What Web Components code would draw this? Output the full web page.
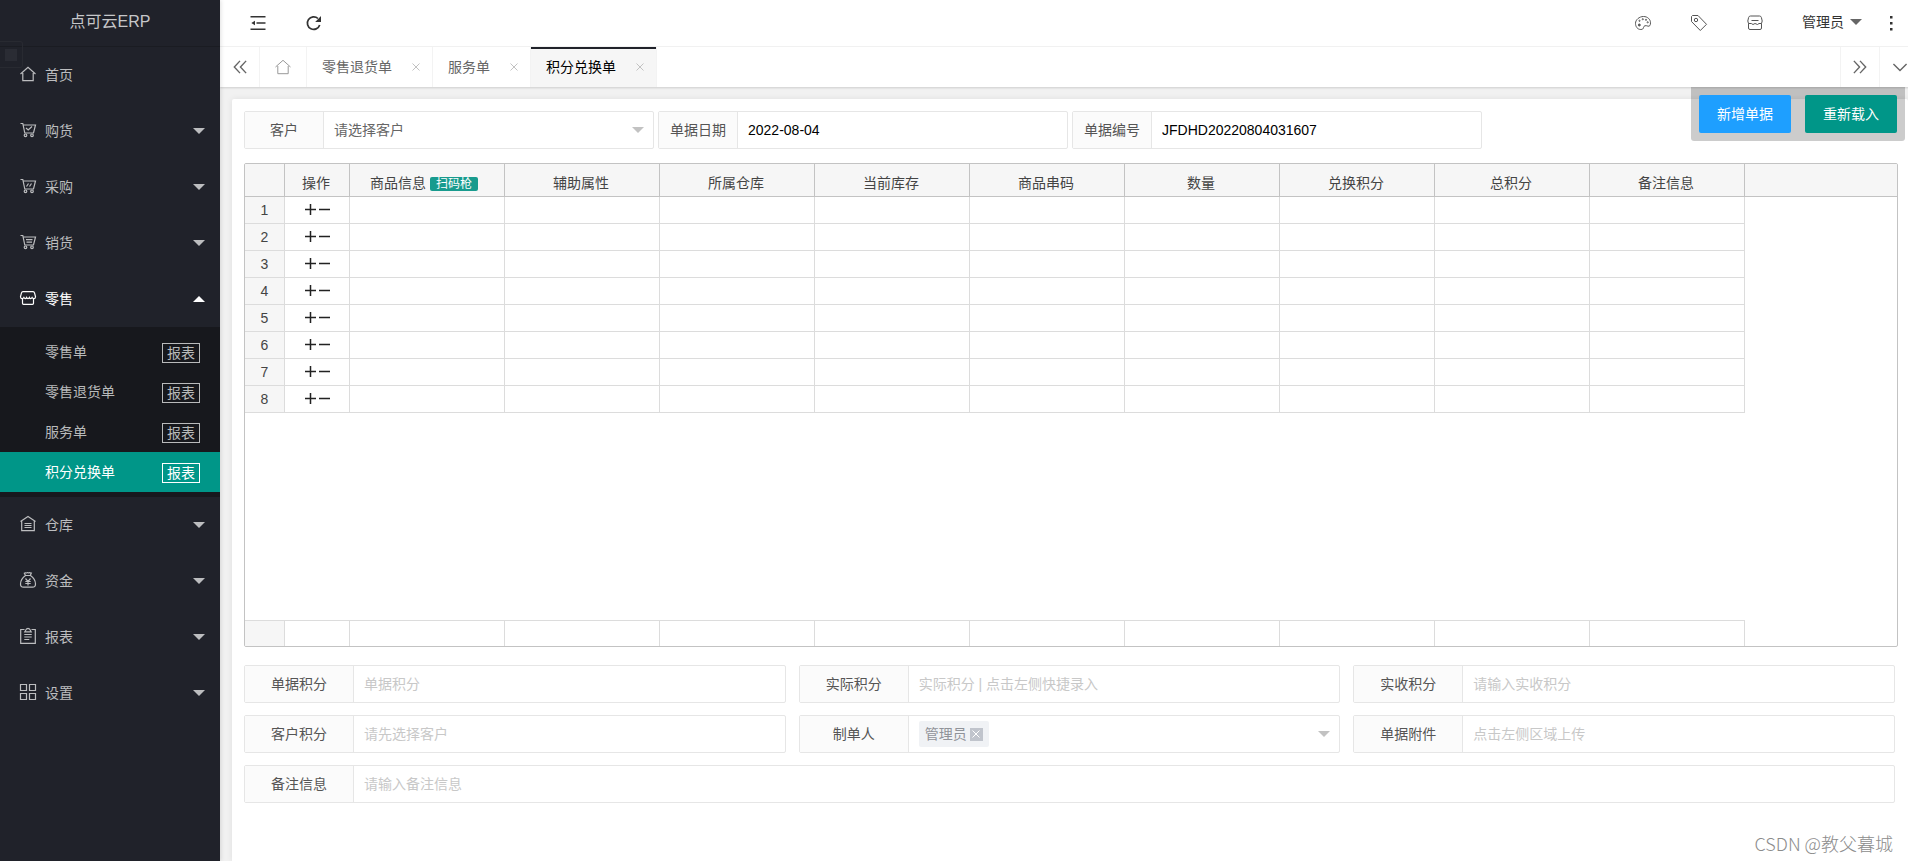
<!DOCTYPE html>
<html lang="zh-CN">
<head>
<meta charset="utf-8">
<title>点可云ERP</title>
<style>
html, body { margin: 0; overflow-x: clip; }
body { font: 14px/20px "Liberation Sans", "Noto Sans CJK SC", sans-serif; color: #333; background: #f1f1f1; }
</style>
</head>
<body>
<erp-app></erp-app>
<script>
class Base extends HTMLElement {
  connectedCallback() {
    if (this.shadowRoot) return;
    const t = document.createElement('template');
    t.innerHTML = `<style>*{box-sizing:border-box}button{font:inherit;border:0;background:none;padding:0;color:inherit;cursor:pointer}a{color:inherit;text-decoration:none}${this.css()}</style>${this.html()}`;
    this.attachShadow({ mode: 'open' }).append(t.content.cloneNode(true));
  }
  attr(n, d = '') { return this.getAttribute(n) ?? d; }
}

const CART = '<path d="M.5 1.500h2.300l2 9.500h8.700l2-8H3.300"/><circle cx="5.500" cy="13.300" r="1.300"/><circle cx="12" cy="13.300" r="1.300"/>';
const ICONS = {
  home: '<path d="M.5 8 8 1.300 15.500 8M2.800 7v7.700h10.400V7"/>',
  cartCheck: CART + '<path d="m6 6 2.200 2L12 4.500"/>',
  cartSlash: CART + '<path d="M6.500 8.500 8.500 5.500M9.500 8.500l2-3"/>',
  cartLines: CART + '<path d="M6 5.700h6.500M6.500 8.200h5.500"/>',
  shop: '<path d="M3 1.700h10q1.200 0 1.500 1.200l1 3.800c0 2.400-2.600 2.400-3.400.8-.8 1.500-2.100 1.500-2.700 0-.7 1.500-2.100 1.500-2.800 0-.6 1.500-1.900 1.500-2.700 0-.8 1.600-3.400 1.600-3.400-.8l1-3.800Q1.800 1.700 3 1.700zM2.500 9v4.300q0 1 1 1h9q1 0 1-1V9"/>',
  store: '<path d="M3.500 1h9q1.500 0 1.900 1.500l.8 3.500-.7 2.500H12l-1.500 1-2.500-1-2 1-1.700-1H1.500L.8 6l.8-3.500Q2 1 3.500 1zM4.500 5.500h7M1.500 8.500v4.500q0 1.500 1.500 1.500h10q1.500 0 1.500-1.500V8.500"/>',
  depot: '<path d="M.5 5.500 8 .5l7.500 5M1.700 5v9.700h12.600V5M4.500 7.500h7M4.500 9.500h7M4.500 11.500h7"/>',
  money: '<path d="M5.500 3.500 4.300 1.200c1-.8 1.800.3 2.700-.5.700-.6 1.400.5 2 .1.800-.4 1.400.4 2.300.4l-1 2.300zM5.500 3.500C2.700 5.500.5 8.600.5 12c0 2.400 1 3.200 3 3.200h9c2 0 3-.800 3-3.200 0-3.400-2.200-6.500-5-8.500M5.500 6.500 8 9.400l2.500-2.900M8 9.400v4M5.300 9.500h5.400M5.300 11.500h5.400"/>',
  report: '<path d="M4.500 1.500H.7v13.800h14.600V1.500h-3.800M4.800 3.800 6.500 1 8 .4 9.500 1l1.700 2.800zM4.300 6.500h7.400M4.300 9h7.400M4.300 11.500h5"/>',
  grid: '<path d="M.5.5h6v6h-6zM9.500.5h6v6h-6zM.5 9.500h6v6h-6zM9.500 9.500h6v6h-6z"/>',
  fold: '<path stroke-width="1.500" d="M.500 1.700h15M6.500 8h9M.500 14.300h15"/><path stroke="none" fill="currentColor" d="M5 5.700v4.600L1.300 8z"/>',
  refresh: '<path stroke-width="1.700" d="M13.700 10A6.300 6.300 0 1 1 12 3.500"/><path stroke="none" fill="currentColor" d="M15 1v6H9.200z"/>',
  palette: '<path d="M8.500 1.500c4 0 7 2.800 7 6.300 0 2.600-1 3.900-2.600 3.300-2.400-.9-4.100-.5-4.400 1.500-.2 1.200-1 1.900-2.700 1.900-3.300 0-5.300-2.800-5.300-6.200S4.200 1.500 8.500 1.500z"/><circle cx="4.500" cy="5.800" r=".6"/><circle cx="7.800" cy="4.200" r=".6"/><circle cx="11" cy="4.800" r=".6"/><circle cx="12.700" cy="7.300" r=".6"/><circle cx="4.300" cy="10" r="1" fill="currentColor"/>',
  tag: '<path d="M.5 1.500v5l8.800 9 6.200-6.200L7 .5H1.500z"/><circle cx="5" cy="5" r="1.700"/>',
  dots: '<path stroke="none" fill="currentColor" d="M7 1h2.500v2.500H7zM7 7h2.500v2.500H7zM7 13h2.500v2.500H7z"/>',
  left: '<path d="M8 1 1.500 8 8 15M15 1 8.500 8l6.500 7"/>',
  right: '<path d="M8 1 14.500 8 8 15M1 1l6.500 7L1 15"/>',
  down: '<path d="M.5 4.500 8 12l7.500-7.500"/>',
  close: '<path d="m1 1 14 14M15 1 1 15"/>',
  plus: '<path d="M0 8h16M8 0v16"/>',
  minus: '<path d="M0 8h16"/>',
  caret: '<path stroke="none" fill="currentColor" d="M0 4h16L8 12z"/>',
  caretUp: '<path stroke="none" fill="currentColor" d="M0 12h16L8 4z"/>'
};
customElements.define('ui-icon', class extends Base {
  css() { return `:host{display:inline-flex;flex:none;width:${this.attr('size', '16')}px;height:${this.attr('size', '16')}px}svg{width:100%;height:100%;overflow:visible}`; }
  html() { return `<svg viewBox="0 0 16 16" fill="none" stroke="currentColor" stroke-width="${this.attr('weight', '1')}" aria-hidden="true">${ICONS[this.attr('name')]}</svg>`; }
});

customElements.define('nav-item', class extends Base {
  css() { return `:host{display:block;color:#bcbdbf}
    a{display:flex;align-items:center;height:56px;padding:0 15px 0 20px;gap:9px}
    .icon{padding-bottom:2px;display:flex}
    .text{flex:1}:host([open]){color:#fff}`; }
  html() {
    const arrow = this.hasAttribute('leaf') ? '' : `<ui-icon name="${this.hasAttribute('open') ? 'caretUp' : 'caret'}" size="12"></ui-icon>`;
    return `<a href="#"><span class="icon"><ui-icon name="${this.attr('icon')}" weight="1.2"></ui-icon></span><span class="text">${this.attr('label')}</span>${arrow}</a><slot></slot>`;
  }
});
customElements.define('nav-sub', class extends Base {
  css() { return `:host{display:flex;align-items:center;justify-content:space-between;height:40px;padding:0 20px 0 45px;color:#b9babb}
    :host([active]){background:#009688;color:#fff}
    .report{border:1px solid;height:20px;line-height:18px;padding:0 4px;margin-top:2px}`; }
  html() { return `<a href="#">${this.attr('label')}</a><a class="report" href="#">报表</a>`; }
});
customElements.define('side-nav', class extends Base {
  css() { return `:host{display:block;width:220px;flex:none;background:#20222a;position:relative;z-index:2;box-shadow:1px 0 4px rgba(0,0,0,.12)}
    h1{margin:0;height:47px;line-height:44px;font-size:16px;font-weight:400;text-align:center;color:#c6c7c9;border-bottom:1px solid #1a1c22}
    .sub{background:#17181d;padding:5px 0}
    .handle{position:absolute;left:0;top:41px;width:23px;height:27px;border:1px solid #282a31;border-left:0;border-radius:0 3px 3px 0;display:grid;place-items:center}
    .handle i{width:12px;height:12px;background:#2a2c34}`; }
  html() { return `<h1>点可云ERP</h1><div class="handle"><i></i></div><nav>
    <nav-item icon="home" label="首页" leaf></nav-item>
    <nav-item icon="cartCheck" label="购货"></nav-item>
    <nav-item icon="cartSlash" label="采购"></nav-item>
    <nav-item icon="cartLines" label="销货"></nav-item>
    <nav-item icon="shop" label="零售" open><div class="sub">
      <nav-sub label="零售单"></nav-sub><nav-sub label="零售退货单"></nav-sub>
      <nav-sub label="服务单"></nav-sub><nav-sub label="积分兑换单" active></nav-sub></div></nav-item>
    <nav-item icon="depot" label="仓库"></nav-item>
    <nav-item icon="money" label="资金"></nav-item>
    <nav-item icon="report" label="报表"></nav-item>
    <nav-item icon="grid" label="设置"></nav-item></nav>`; }
});

customElements.define('top-bar', class extends Base {
  css() { return `:host{display:flex;justify-content:space-between;height:47px;padding:0 0 0 10px;background:#fff;border-bottom:1px solid #f3f3f3}
    div{display:flex}button{display:flex;align-items:center;justify-content:center;width:56px;height:46px}
    .thin{color:#555}.user{width:auto;padding:0 0 2px 19px;gap:6px}.user ui-icon{color:#666}.more{width:58px}`; }
  html() { return `<div><button aria-label="收起菜单"><ui-icon name="fold"></ui-icon></button><button aria-label="刷新"><ui-icon name="refresh"></ui-icon></button></div>
    <div><button class="thin" aria-label="主题"><ui-icon name="palette"></ui-icon></button><button class="thin" aria-label="便签"><ui-icon name="tag"></ui-icon></button><button class="thin" aria-label="商城"><ui-icon name="store"></ui-icon></button>
    <button class="user">管理员<ui-icon name="caret" size="12"></ui-icon></button><button class="more" aria-label="更多"><ui-icon name="dots"></ui-icon></button></div>`; }
});

customElements.define('page-tab', class extends Base {
  css() { return `:host{display:flex;align-items:center;gap:20px;padding:0 12px 0 15px;border-right:1px solid #f3f3f3;color:#666}
    :host([active]){background:#f6f6f6;color:#000;box-shadow:inset 0 2px #20222a}
    button{display:flex;color:#c2c2c2}`; }
  html() { return `<a href="#"><slot></slot></a><button aria-label="关闭"><ui-icon name="close" size="8" weight="2"></ui-icon></button>`; }
});
customElements.define('tab-bar', class extends Base {
  css() { return `:host{display:flex;height:40px;background:#fff;position:relative;z-index:1;box-shadow:0 1px 2px rgba(0,0,0,.15);color:#666}
    .cell{width:40px;border-right:1px solid #f3f3f3;display:flex;align-items:center;justify-content:center}
    .home{width:47px;color:#999}.push{margin-left:auto;border-left:1px solid #f3f3f3}`; }
  html() { return `<button class="cell" aria-label="向左"><ui-icon name="left" size="14" weight="1.6"></ui-icon></button>
    <a class="cell home" href="#" aria-label="首页"><ui-icon name="home"></ui-icon></a>
    <page-tab>零售退货单</page-tab><page-tab>服务单</page-tab><page-tab active>积分兑换单</page-tab>
    <button class="cell push" aria-label="向右"><ui-icon name="right" size="14" weight="1.6"></ui-icon></button>
    <button class="cell" aria-label="标签操作"><ui-icon name="down" size="14" weight="1.6"></ui-icon></button>`; }
});

customElements.define('form-field', class extends Base {
  css() { return `:host{display:flex;height:38px;border:1px solid #e6e6e6;border-radius:2px;background:#fff;min-width:0}
    label{flex:none;width:var(--label,109px);border-right:1px solid #e6e6e6;background:#fbfbfb;color:#555;display:flex;align-items:center;justify-content:center}
    input,select{flex:1;min-width:0;border:0;outline:0;background:none;font:inherit;color:#000;padding:0 10px;appearance:none}
    select{color:#666}
    input::placeholder{color:#c8c8c8;opacity:1}
    .box{flex:1;display:flex;align-items:center;min-width:0}
    .box>ui-icon{color:#c2c2c2;margin-right:9px}
    .chips{flex:1;padding-left:10px;display:flex}
    .chip{display:flex;align-items:center;gap:3px;height:26px;padding:0 6px;border-radius:2px;background:#f0f2f5;color:#909399}
    .chip button{display:grid;place-items:center;width:13px;height:13px;background:#c0c4cc;color:#fff}`; }
  html() {
    const l = this.attr('label'), k = this.attr('kind');
    let c = `<input id="c" type="text" value="${this.attr('value')}" placeholder="${this.attr('placeholder')}">`;
    if (k === 'select') c = `<div class="box"><select id="c"><option>${this.attr('placeholder')}</option></select><ui-icon name="caret" size="12"></ui-icon></div>`;
    if (k === 'chips') c = `<div class="box" role="group" aria-labelledby="l"><div class="chips"><span class="chip">${this.attr('value')}<button id="c" aria-label="移除"><ui-icon name="close" size="8" weight="2"></ui-icon></button></span></div><ui-icon name="caret" size="12"></ui-icon></div>`;
    return `<label id="l" for="c">${l}</label>${c}`;
  }
});

customElements.define('item-grid', class extends Base {
  css() { return `:host{display:block;border:1px solid #c3c3c3;border-radius:2px;overflow:hidden;color:#444}
    table{width:100%;table-layout:fixed;border-collapse:separate;border-spacing:0}
    th,td{padding:0;font-weight:400;text-align:center}
    .n{width:40px}.op{width:65px}.c{width:155px}
    thead th{height:33px;padding:5px 2px 0 0;background:#f6f6f6;border:solid #c3c3c3;border-width:0 1px 1px 0}
    tbody th,tbody td,tfoot td,tfoot th{border:solid #dcdcdc;border-width:0 1px 1px 0;height:27px}
    tbody th,tfoot th{background:#f6f6f6}
    tfoot th,tfoot td{height:26px;border-width:1px 1px 0 0}
    tr>:last-child{border-right:0}tbody tr>:last-child,tfoot tr>:last-child{border:0}
    .blank td{height:207px}
    .ops{display:flex;justify-content:center;gap:3px;padding-bottom:2px;color:#222}.ops button{display:flex}
    .scan{height:14px;line-height:14px;font-size:12px;padding:0 6px;margin:0 4px;border-radius:2px;background:#189b8e;color:#fff}`; }
  html() {
    const cols = ['辅助属性', '所属仓库', '当前库存', '商品串码', '数量', '兑换积分', '总积分', '备注信息'];
    const td = '<td></td>'.repeat(10);
    const rows = [1, 2, 3, 4, 5, 6, 7, 8].map(i => `<tr><th scope="row">${i}</th><td><div class="ops"><button aria-label="添加行"><ui-icon name="plus" size="11" weight="2.200"></ui-icon></button><button aria-label="删除行"><ui-icon name="minus" size="11" weight="2.200"></ui-icon></button></div></td>${td}</tr>`).join('');
    return `<table><colgroup><col class="n"><col class="op">${'<col class="c">'.repeat(9)}<col></colgroup>
      <thead><tr><th></th><th>操作</th><th>商品信息<button class="scan">扫码枪</button></th>${cols.map(c => `<th>${c}</th>`).join('')}<th></th></tr></thead>
      <tbody>${rows}<tr class="blank"><td colspan="12"></td></tr></tbody>
      <tfoot><tr><th></th><td></td>${td}</tr></tfoot></table>`;
  }
});

customElements.define('action-bar', class extends Base {
  css() { return `:host{position:absolute;z-index:1;top:0;right:15px;display:flex;gap:14px;padding:8px;background:rgba(0,0,0,.2);border-radius:0 0 3px 3px}
    button{height:38px;width:92px;border-radius:2px;background:#1e9fff;color:#fff}.reload{background:#009688}`; }
  html() { return `<button>新增单据</button><button class="reload">重新载入</button>`; }
});

customElements.define('exchange-page', class extends Base {
  css() { return `:host{flex:1;display:flex;position:relative;padding:12px 12px 0;background:#f1f1f1}
    .card{flex:1;min-width:0;background:#fff;border-radius:2px 2px 0 0;box-shadow:0 0 6px rgba(0,0,0,.08);padding:12px 10px 12px 12px}
    .query{display:grid;grid-template-columns:repeat(auto-fill,minmax(0,410px));gap:4px;--label:79px}
    item-grid{margin:14px 0 18px}
    .totals{display:grid;grid-template-columns:repeat(3,1fr);gap:12px 13px;margin-right:3px}
    .wide{grid-column:1/-1}
    .mark{position:absolute;right:27px;bottom:6px;font:18px/24px "Noto Sans CJK SC",sans-serif;font-weight:300;color:#8c8c8c}`; }
  html() { return `<action-bar></action-bar><main class="card"><div class="query">
      <form-field label="客户" kind="select" placeholder="请选择客户"></form-field>
      <form-field label="单据日期" value="2022-08-04"></form-field>
      <form-field label="单据编号" value="JFDHD20220804031607"></form-field></div>
    <item-grid></item-grid>
    <div class="totals">
      <form-field label="单据积分" placeholder="单据积分"></form-field>
      <form-field label="实际积分" placeholder="实际积分 | 点击左侧快捷录入"></form-field>
      <form-field label="实收积分" placeholder="请输入实收积分"></form-field>
      <form-field label="客户积分" placeholder="请先选择客户"></form-field>
      <form-field label="制单人" kind="chips" value="管理员"></form-field>
      <form-field label="单据附件" placeholder="点击左侧区域上传"></form-field>
      <form-field class="wide" label="备注信息" placeholder="请输入备注信息"></form-field>
    </div></main><div class="mark">CSDN @教父暮城</div>`; }
});

customElements.define('erp-app', class extends Base {
  css() { return `:host{display:flex;min-height:100vh;margin-right:-12px}
    .main{flex:1;min-width:0;display:flex;flex-direction:column}`; }
  html() { return `<side-nav></side-nav><div class="main"><top-bar></top-bar><tab-bar></tab-bar><exchange-page></exchange-page></div>`; }
});
</script>
</body>
</html>
